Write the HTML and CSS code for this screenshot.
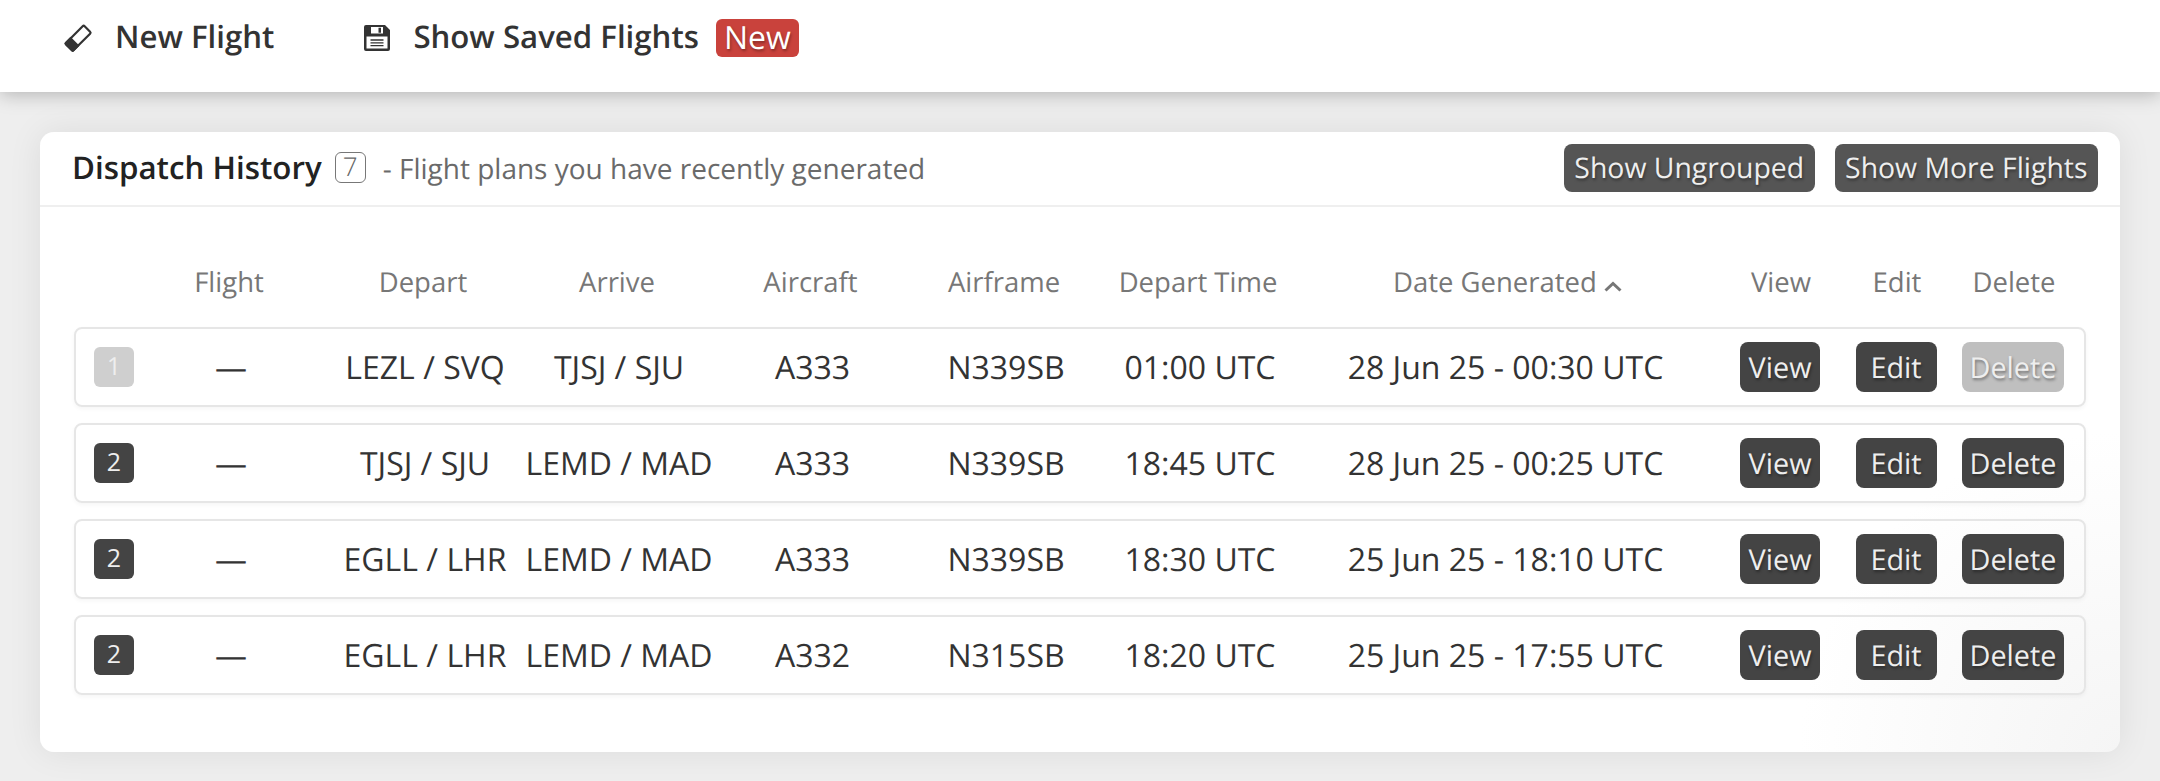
FILE: index.html
```html
<!DOCTYPE html>
<html lang="en">
<head>
<meta charset="utf-8">
<title>Dispatch History</title>
<link rel="stylesheet" href="styles.css">
</head>
<body>
<nav class="nav">
  <a class="nav-item nav-new">
    <svg class="nav-icon" viewBox="0 0 28 26" aria-hidden="true">
      <g transform="rotate(-45 14 13)">
        <rect x="1" y="8" width="26" height="10.500" rx="1.400" fill="#fff" stroke="#333" stroke-width="2.200"/>
        <path d="M1.400 6.900h8.100v12.700H1.400A1.400 1.400 0 0 1 0 18.200V8.300a1.400 1.400 0 0 1 1.400-1.400z" fill="#333"/>
      </g>
    </svg>
    <span>New Flight</span>
  </a>
  <a class="nav-item nav-saved">
    <svg class="nav-icon" viewBox="0 0 26 26" aria-hidden="true">
      <path fill="#333" fill-rule="evenodd" d="M2 0h19l5 5v19a2 2 0 0 1-2 2H2a2 2 0 0 1-2-2V2a2 2 0 0 1 2-2zM7 2v6.500h12V2zM14.500 2.800h2.500v4.900h-2.500zM2.500 11.500V23.500h21V11.500z"/>
      <path stroke="#333" stroke-width="1.300" d="M6.500 15h13M6.500 17.800h13M6.500 20.600h13"/>
    </svg>
    <span>Show Saved Flights</span>
  </a>
  <span class="new-badge">New</span>
</nav>

<main class="page">
  <section class="card">
    <header class="card-head">
      <h1 class="card-title">Dispatch History</h1>
      <span class="count">7</span>
      <span class="subtitle">- Flight plans you have recently generated</span>
      <div class="head-actions">
        <button class="btn btn-head">Show Ungrouped</button>
        <button class="btn btn-head">Show More Flights</button>
      </div>
    </header>

    <div class="table">
      <div class="cols table-head">
        <span></span>
        <span>Flight</span>
        <span>Depart</span>
        <span>Arrive</span>
        <span>Aircraft</span>
        <span>Airframe</span>
        <span>Depart Time</span>
        <span class="sorted">Date Generated
          <svg class="caret" viewBox="0 0 18 12" aria-hidden="true"><path d="M1.500 10.500L9 3.500 16.500 10.500" fill="none" stroke="#777" stroke-width="3"/></svg>
        </span>
        <span>View</span>
        <span>Edit</span>
        <span>Delete</span>
      </div>

      <div class="cols row">
        <span class="num num-muted">1</span>
        <span>—</span>
        <span>LEZL / SVQ</span>
        <span>TJSJ / SJU</span>
        <span>A333</span>
        <span>N339SB</span>
        <span>01:00 UTC</span>
        <span>28 Jun 25 - 00:30 UTC</span>
        <button class="btn">View</button>
        <button class="btn btn-edit">Edit</button>
        <button class="btn btn-disabled">Delete</button>
      </div>

      <div class="cols row">
        <span class="num">2</span>
        <span>—</span>
        <span>TJSJ / SJU</span>
        <span>LEMD / MAD</span>
        <span>A333</span>
        <span>N339SB</span>
        <span>18:45 UTC</span>
        <span>28 Jun 25 - 00:25 UTC</span>
        <button class="btn">View</button>
        <button class="btn btn-edit">Edit</button>
        <button class="btn">Delete</button>
      </div>

      <div class="cols row">
        <span class="num">2</span>
        <span>—</span>
        <span>EGLL / LHR</span>
        <span>LEMD / MAD</span>
        <span>A333</span>
        <span>N339SB</span>
        <span>18:30 UTC</span>
        <span>25 Jun 25 - 18:10 UTC</span>
        <button class="btn">View</button>
        <button class="btn btn-edit">Edit</button>
        <button class="btn">Delete</button>
      </div>

      <div class="cols row">
        <span class="num">2</span>
        <span>—</span>
        <span>EGLL / LHR</span>
        <span>LEMD / MAD</span>
        <span>A332</span>
        <span>N315SB</span>
        <span>18:20 UTC</span>
        <span>25 Jun 25 - 17:55 UTC</span>
        <button class="btn">View</button>
        <button class="btn btn-edit">Edit</button>
        <button class="btn">Delete</button>
      </div>
    </div>
  </section>
</main>
</body>
</html>
```

FILE: styles.css
```css
* { box-sizing: border-box; }

html, body { height: 100%; }

body {
  margin: 0;
  background: #eeeeee;
  color: #333;
  font-family: "Open Sans", "Noto Sans", sans-serif;
  text-rendering: geometricPrecision;
  overflow: hidden;
}

.nav {
  height: 92px;
  padding: 19px 0 0 64px;
  display: flex;
  align-items: flex-start;
  background: #fff;
  box-shadow: 0 2px 18px rgba(0, 0, 0, 0.26);
  position: relative;
}

.nav-item {
  display: flex;
  align-items: center;
  height: 36px;
  font-size: 31.200px;
  font-weight: 600;
  color: #333;
}

.nav-icon { width: 28px; height: 26px; flex: none; margin-top: 2px; overflow: visible; }

.nav-new { gap: 23px; margin-right: 90px; }
.nav-saved { gap: 23px; margin-right: 17px; }
.nav-saved .nav-icon { width: 26px; }

.new-badge {
  height: 38px;
  width: 83px;
  background: #c9423c;
  color: #fff;
  border-radius: 6px;
  font-size: 32px;
  font-weight: 500;
  line-height: 37px;
  text-align: center;
  text-shadow: 1px 2px 3px rgba(0, 0, 0, 0.35);
}

.page { padding: 40px 40px 0; }

.card {
  background: radial-gradient(circle 320px at 100% 100%, #f5f5f5, #fff);
  border-radius: 14px;
  padding-bottom: 57px;
  box-shadow: 0 0 34px rgba(0, 0, 0, 0.08);
}

.card-head {
  height: 75px;
  padding: 0 22px 2px 32px;
  display: flex;
  align-items: center;
  border-bottom: 2px solid #efefef;
}

.card-title {
  margin: 0;
  font-size: 31.300px;
  font-weight: 600;
  color: #222;
}

.count {
  margin-left: 13px;
  width: 31px;
  height: 31px;
  border: 1.5px solid #777;
  border-radius: 6px;
  font-size: 26px;
  font-weight: 300;
  line-height: 27px;
  text-align: center;
  color: #666;
}

.subtitle {
  margin: 2px 0 0 17px;
  font-size: 28px;
  color: #6a6a6a;
}

.head-actions {
  margin-left: auto;
  display: flex;
  gap: 20px;
}

.btn {
  height: 50px;
  min-width: 80px;
  padding: 0 8px;
  border: 0;
  border-radius: 8px;
  background: #444;
  color: #eee;
  font: 400 28.8px "Open Sans", "Noto Sans", sans-serif;
  text-rendering: geometricPrecision;
  text-shadow: 1px 2px 3px rgba(0, 0, 0, 0.4);
  justify-self: center;
  margin-right: 6px;
}

.btn-edit { min-width: 81px; }

.btn-head {
  height: 48px;
  background: #555;
  padding: 0 10.500px;
  margin-right: 0;
  font-size: 28.400px;
}

.btn-disabled { background: #bfbfbf; color: #eee; }

.table { padding: 0 34px; }

.cols {
  display: grid;
  grid-template-columns: 58px repeat(3, 194px) 193px repeat(2, 194px) 417px 138px 94px 140px;
  align-items: center;
  justify-items: center;
  text-align: center;
}

.table-head {
  height: 120px;
  padding-top: 31px;
  font-size: 27.5px;
  color: #777;
}

.sorted { white-space: nowrap; padding-left: 8px; }

.caret { width: 18px; height: 12px; }

.row {
  height: 80px;
  margin-bottom: 16px;
  border: 2px solid #e6e6e6;
  border-radius: 8px;
  box-shadow: 0 2px 4px rgba(0, 0, 0, 0.04);
  font-size: 32px;
  color: #333;
}

.row:last-child { margin-bottom: 0; }

.num {
  margin-left: 18px;
  width: 40px;
  height: 40px;
  border-radius: 6px;
  background: #444;
  color: #eee;
  font-size: 25px;
  line-height: 38px;
  text-align: center;
}

.num-muted { background: #cfcfcf; }
```
